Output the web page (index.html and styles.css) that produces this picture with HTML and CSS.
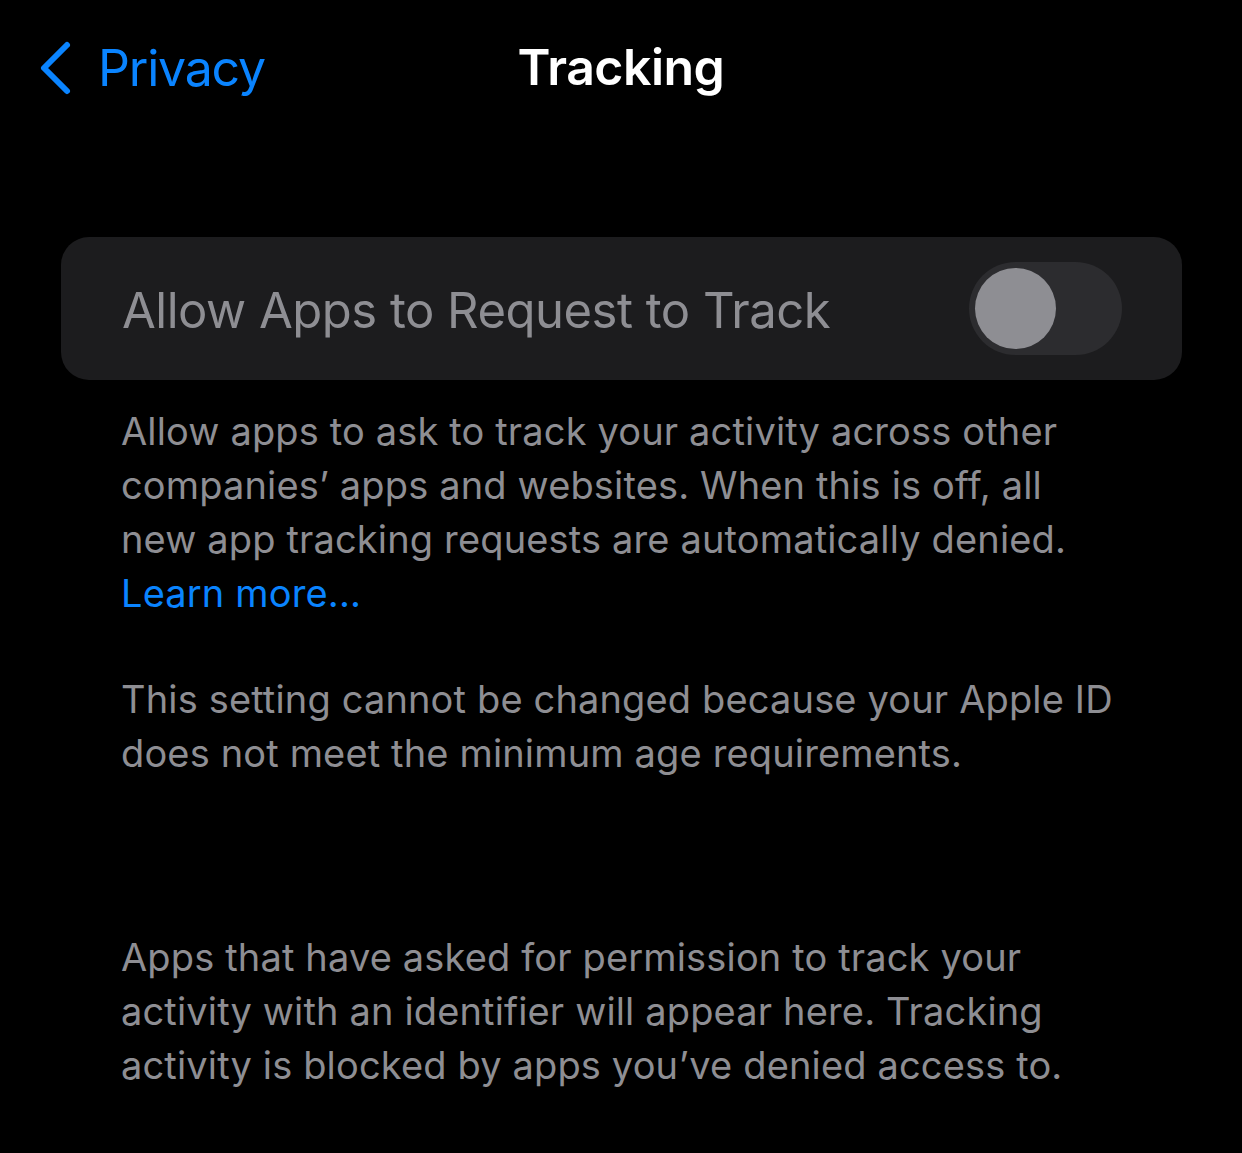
FILE: index.html
```html
<!DOCTYPE html>
<html lang="en">
<head>
  <meta charset="UTF-8">
  <meta name="viewport" content="width=device-width, initial-scale=1.0">
  <title>Tracking</title>
  <link rel="stylesheet" href="styles.css">
</head>
<body>

  <div class="nav-bar">
    <a class="back-link" href="#">
      <svg class="chevron" width="34" height="56" viewBox="0 0 34 56">
        <path d="M29 5 L6 28 L29 51" fill="none" stroke="#0a84ff" stroke-width="6" stroke-linecap="round" stroke-linejoin="round"/>
      </svg>
      <span>Privacy</span>
    </a>
    <h1 class="nav-title">Tracking</h1>
  </div>

  <div class="content">
    <div class="cell">
      <span class="cell-label">Allow Apps to Request to Track</span>
      <div class="toggle">
        <div class="knob"></div>
      </div>
    </div>

    <p class="footer first">
      Allow apps to ask to track your activity across other<br>
      companies’ apps and websites. When this is off, all<br>
      new app tracking requests are automatically denied.<br>
      <a class="learn-more" href="#">Learn more...</a>
    </p>

    <p class="footer second">
      This setting cannot be changed because your Apple ID<br>
      does not meet the minimum age requirements.
    </p>

    <p class="footer third">
      Apps that have asked for permission to track your<br>
      activity with an identifier will appear here. Tracking<br>
      activity is blocked by apps you’ve denied access to.
    </p>
  </div>

</body>
</html>
```

FILE: styles.css
```css
body {
  margin: 0;
  padding: 0;
  background-color: #000;
  font-family: 'Inter', 'Liberation Sans', sans-serif;
  color: #fff;
}

/* Barra de navegação */
.nav-bar {
  position: relative;
  height: 134px;
  display: flex;
  align-items: center;
  justify-content: center;
}

.back-link {
  position: absolute;
  left: 38px;
  top: 38px;
  display: flex;
  align-items: center;
  gap: 26px;
  color: #0a84ff;
  text-decoration: none;
  font-size: 50px;
  letter-spacing: -1.2px;
}

.nav-title {
  margin: 0;
  font-size: 50px;
  font-weight: 600;
  letter-spacing: -0.5px;
}

.content {
  padding: 103px 60px 0 61px;
}

.cell {
  height: 143px;
  background-color: #1c1c1e;
  border-radius: 28px;
  display: flex;
  align-items: center;
  justify-content: space-between;
  padding: 4px 60px 0 61px;
  box-sizing: border-box;
}

.cell-label {
  font-size: 49px;
  color: #8e8e93;
  letter-spacing: -0.5px;
}

.toggle {
  width: 153px;
  height: 93px;
  margin-top: -4px;
  border-radius: 47px;
  background-color: #2c2c2f;
  display: flex;
  align-items: center;
  padding-left: 6px;
  box-sizing: border-box;
}

.knob {
  width: 81px;
  height: 81px;
  border-radius: 50%;
  background-color: #8e8e93;
}

.footer {
  margin: 0;
  padding-left: 60px;
  font-size: 38px;
  line-height: 54px;
  letter-spacing: 0.15px;
  color: #8e8e93;
}

.footer.first {
  margin-top: 24px;
}

.footer.second {
  margin-top: 52px;
}

.footer.third {
  margin-top: 150px;
}

.learn-more {
  color: #0a84ff;
  text-decoration: none;
}
```
